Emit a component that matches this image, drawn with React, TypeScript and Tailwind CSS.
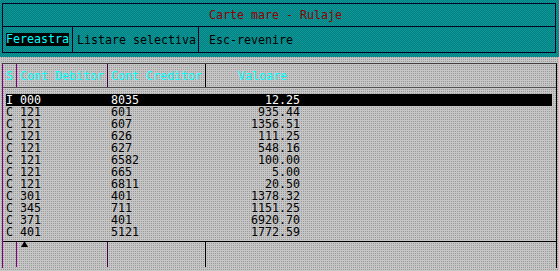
import React from "react";

const rows: [string, string, string, string][] = [
  ["I", "000", "8035", "12.25"],
  ["C", "121", "601", "935.44"],
  ["C", "121", "607", "1356.51"],
  ["C", "121", "626", "111.25"],
  ["C", "121", "627", "548.16"],
  ["C", "121", "6582", "100.00"],
  ["C", "121", "665", "5.00"],
  ["C", "121", "6811", "20.50"],
  ["C", "301", "401", "1378.32"],
  ["C", "345", "711", "1151.25"],
  ["C", "371", "401", "6920.70"],
  ["C", "401", "5121", "1772.59"],
];

export default function App() {
  return (
    <div
      className="w-[559px] h-[271px] overflow-hidden text-[11.63px] leading-[12px] flex flex-col"
      style={{ fontFamily: '"DejaVu Sans Mono", "Liberation Mono", monospace' }}
    >
      {/* Top teal panel */}
      <div className="h-[57px] pt-[3px] pl-[2px] bg-[#088888] bg-[conic-gradient(#008080_0_25%,#109898_0_50%,#008080_0_75%,#109898_0)] bg-[length:2px_2px]">
        <div className="w-[554px] h-[50px] border border-[#000020] flex flex-col">
          <div className="h-[23px] border-b border-[#000020] flex items-center pl-[206px] text-[#900000]">
            Carte mare - Rulaje
          </div>
          <div className="flex-1 flex items-center">
            <div className="w-[70px] h-full flex items-center pl-[3px] border-r border-[#000020]">
              <span className="bg-black text-[#00ffff] h-[13px] leading-[13px]">Fereastra</span>
            </div>
            <div className="w-[126px] h-full flex items-center pl-[4px] border-r border-[#000020] text-black">
              Listare selectiva
            </div>
            <div className="h-full flex items-center pl-[10px] text-black">Esc-revenire</div>
          </div>
        </div>
      </div>

      {/* Gray area */}
      <div className="flex-1 pt-[6px] pl-[2px] bg-[#bdbdbd] bg-[conic-gradient(#9a9a9a_0_25%,#c6c6c6_0)] bg-[length:2px_2px]">
        <div className="relative w-[555px] h-[205px] border-l border-l-[#800080] border-r border-r-black border-t border-t-[#404040] flex flex-col">
          {/* header */}
          <div className="h-[24px] flex border-b border-b-[#505050] text-[#00ffff]">
            <div className="w-[14px] border-r border-r-[#800080] pl-[3px] flex items-center">S</div>
            <div className="w-[91px] border-r border-r-[#400040] pl-[3px] flex items-center">Cont Debitor</div>
            <div className="w-[98px] border-r border-r-black pl-[3px] flex items-center">Cont Creditor</div>
            <div className="flex-1 pl-[32px] flex items-center">Valoare</div>
          </div>
          {/* data */}
          <div className="h-[154px] pt-[6px] pl-[3px] border-b border-b-black">
            {rows.map((r, i) => (
              <div
                key={i}
                className={
                  "w-[546px] h-[12px] leading-[12px] flex overflow-hidden " +
                  (i === 0 ? "bg-black text-white" : "text-black")
                }
              >
                <span className="w-[14px]">{r[0]}</span>
                <span className="w-[91px]">{r[1]}</span>
                <span className="w-[94px]">{r[2]}</span>
                <span className="w-[95px] text-right">{r[3]}</span>
              </div>
            ))}
          </div>
          {/* footer */}
          <div className="h-[25px] flex">
            <div className="w-[14px] border-r border-r-[#800080]" />
            <div className="w-[91px] border-r border-r-[#400040]" />
            <div className="w-[98px] border-r border-r-black" />
            <div className="flex-1" />
          </div>
          <svg className="absolute left-[18px] top-[177px]" width="7" height="6" viewBox="0 0 7 6">
            <polygon points="3.5,0 7,6 0,6" fill="#000" />
          </svg>
        </div>
      </div>
    </div>
  );
}
